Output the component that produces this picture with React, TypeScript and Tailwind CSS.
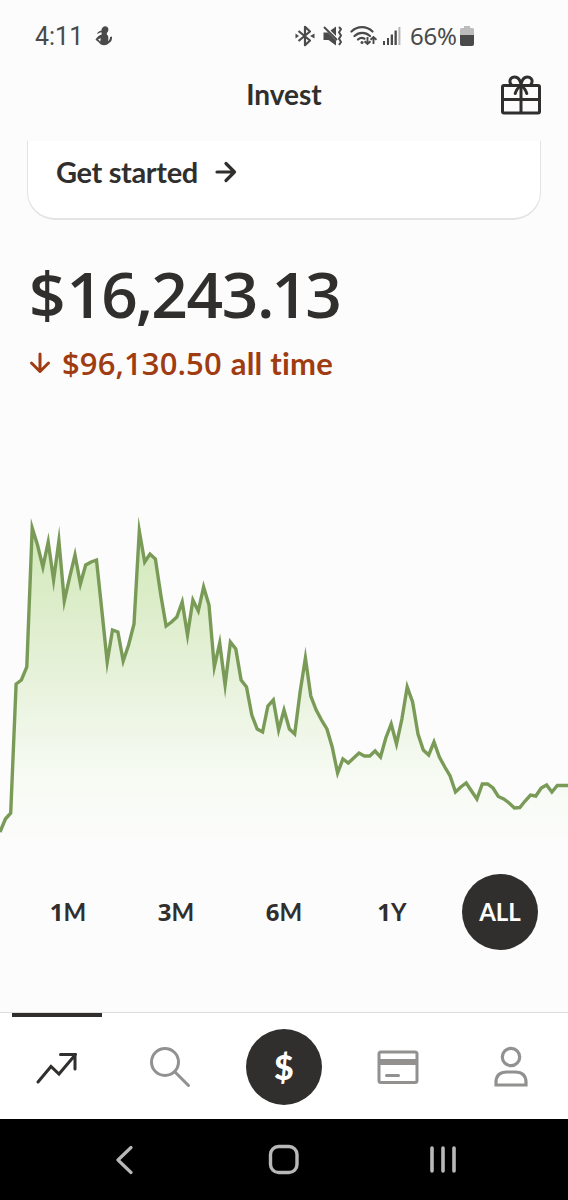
import React from 'react';

const INK = '#302f2e';
const MUTED = '#929190';

const CHART_WIDTH = 568;
const CHART_TOP = 500;
const CHART_HEIGHT = 350;

const PRICES = [
  832, 819, 813, 684, 680, 667, 528, 545, 567, 542, 580, 541, 601, 577, 555, 584, 565, 562, 560, 610,
  662, 630, 632, 661, 645, 624, 531, 562, 554, 559, 595, 626, 622, 617, 602, 635, 600, 611, 587, 605,
  667, 643, 685, 642, 649, 680, 687, 715, 729, 732, 706, 700, 730, 710, 729, 734, 692, 658, 696, 710,
  720, 729, 747, 773, 759, 763, 758, 753, 756, 756, 751, 757, 738, 724, 744, 719, 687, 702, 734, 750,
  755, 742, 757, 767, 776, 792, 787, 783, 791, 799, 784, 784, 788, 796.5, 799, 803, 808, 807.5, 801, 795,
  796, 788, 785, 792, 785.5, 785.5, 785.5,
];

const RANGES = ['1M', '3M', '6M', '1Y', 'ALL'];

const StatusBar = () => (
  <div className="flex h-[72px] shrink-0 items-center pl-[35px] text-[#4a4a4a]">
    <span className="w-[49px] font-[Roboto,sans-serif] text-[25px] leading-none">4:11</span>
    <svg className="ml-[11px]" width="18" height="20" viewBox="0 0 18 20" fill="currentColor">
      <path d="M6.500 3.500C7 1.500 8.500.2 10.200.2c2 0 3.200 1.500 3.200 3.300 0 1.500-.6 2.700-1.600 3.500v1.500c1.400 1 1.800 2.500 1.500 4.500l-.2 2c1.300-.6 1.700-2 2-4l1.900-.5c.3 3-.6 5.300-3 6.500-1.300 1.500-3 2.200-5 2.200-2.300 0-4-1-5.200-3L.5 13.700c1.200-2.400 3.500-4.400 6.200-5.200L6.500 6.300C4.800 6.500 3.700 7.700 2 7.900c.4-1.700 2.300-2.700 4.500-3.400z" />
      <path d="M3 13.300l2.200 2.200.6-3.300z" fill="#fcfcfc" />
    </svg>
    <svg className="ml-[182px]" width="20" height="22" viewBox="0 0 20 22" fill="none" stroke="currentColor" strokeWidth="2.200">
      <path d="M3.500 6l11.500 9.500-5 4.700V1.800l5 4.700L3.500 16" strokeLinejoin="round" />
      <path d="M.5 8.500L4 11 .5 13.500zM19.500 8.500L15 11l4.500 2.500z" fill="currentColor" stroke="none" />
    </svg>
    <svg className="ml-[7px]" width="22" height="22" viewBox="0 0 22 22" fill="none" stroke="currentColor" strokeWidth="2">
      <path d="M1.500 7.500h4.500l8 8v5L6.500 15h-5z" fill="currentColor" stroke="none" />
      <path d="M8.500 5.500L14 1.500v9.500z" fill="currentColor" stroke="none" />
      <path d="M2 2l13 13" />
      <path d="M17 2l2 2.200-2 3 2 3.300-2 3.200 2 3.300-2 3" strokeLinejoin="round" />
    </svg>
    <svg className="ml-[6px]" width="27" height="22" viewBox="0 0 27 22" fill="none" stroke="currentColor" strokeWidth="2.200">
      <path d="M1.500 6.500c6-5.800 15-5.800 21 0M4.500 11c4.500-4.200 11-4.200 15.500 0M8 14.500c2-1.800 4.500-2 6.500-.8" strokeLinecap="round" />
      <circle cx="12" cy="17.500" r="1.500" fill="currentColor" stroke="none" />
      <path d="M17.500 12v7m-3-2.800L17.500 19l3-2.800M23.500 19v-7m-3 2.800l3-2.800 3 2.800" strokeWidth="1.900" />
    </svg>
    <svg className="ml-[6px]" width="18" height="22" viewBox="0 0 18 22" fill="currentColor">
      <path d="M0 16h2v4H0zM4 13h2v7H4zM7.700 9.500h2.300v10.500H7.700zM11.500 5.500h2.300V20h-2.300z" />
      <path d="M15.400 2h2v18h-2z" opacity=".4" />
    </svg>
    <span className="ml-[9px] w-[48px] font-['Noto_Sans',sans-serif] text-[24px] leading-none tracking-[-0.2px]">66%</span>
    <svg className="ml-[2px]" width="14" height="22" viewBox="0 0 14 22" fill="currentColor">
      <path d="M4 1h6v2h2.500q1.500 0 1.500 1.500V10H0V4.500Q0 3 1.500 3H4z" fill="#bcbcbc" />
      <path d="M0 10h14v9q0 2-2 2H2q-2 0-2-2z" />
    </svg>
  </div>
);

const Header = () => (
  <header className="grid h-[69px] shrink-0 grid-cols-[1fr_auto_1fr] items-start px-[26px]">
    <h1 className="col-start-2 pt-[4px] text-[28px] leading-[36px] font-bold">Invest</h1>
    <button className="mt-[3px] justify-self-end" aria-label="Gifts">
      <svg width="42" height="40" viewBox="0 0 42 40" fill="none" stroke={INK} strokeWidth="3">
        <rect x="2.500" y="10.500" width="37" height="27.500" rx="1.500" />
        <path d="M2.500 24.500h37M21 11v27" />
        <path d="M21 11c0-5-2.500-9-6.500-9-3 0-5 2.500-4.500 5 .3 2 1.500 3.500 3 3.500M21 11c0-5 2.500-9 6.500-9 3 0 5 2.500 4.500 5-.3 2-1.500 3.500-3 3.500" />
        <path d="M21 11c-3 1.500-4.800 4-5.800 7.500M21 11c3 1.500 4.800 4 5.800 7.500" strokeLinecap="round" />
      </svg>
    </button>
  </header>
);

const PromoCard = () => (
  <div className="mx-[27px] flex h-[79px] shrink-0 items-start gap-[17px] rounded-b-[28px] border-x-[1.500px] border-b-2 border-[#e3e3e3] bg-white pt-[13px] pl-[28px]">
    <span className="text-[29px] leading-[36px] font-bold tracking-[-0.35px]">Get started</span>
    <svg className="mt-[7px]" width="22" height="22" viewBox="0 0 22 22" fill="none" stroke={INK} strokeWidth="3.200" strokeLinecap="round" strokeLinejoin="round">
      <path d="M2 11h17.500M11 2.500l8.500 8.500-8.500 8.500" />
    </svg>
  </div>
);

const Balance = () => (
  <section className="h-[280px] shrink-0 pt-[40px] pl-[29px] font-['Open_Sans',sans-serif] font-semibold">
    <p className="text-[64px] leading-[68px] whitespace-nowrap">
      <span className="tracking-[1px]">$</span>
      <span className="tracking-[-2px]">16,</span>
      <span className="tracking-[-1.300px]">243</span>
      <span className="tracking-[-3px]">.13</span>
    </p>
    <div className="mt-[15px] flex items-center text-[#9f3c11]">
      <svg width="22" height="22" viewBox="0 0 22 22" fill="none" stroke="currentColor" strokeWidth="3" strokeLinecap="round" strokeLinejoin="round">
        <path d="M11 2v17M2.500 11l8.500 8.500 8.500-8.500" />
      </svg>
      <p className="ml-[11px] text-[31px] leading-[40px] whitespace-nowrap">
        <span className="tracking-[0.1px]">$96,130.50</span>
        <span className="ml-[9px] font-[Lato,sans-serif] font-bold tracking-[0.2px] [font-variant-ligatures:none]">all time</span>
      </p>
    </div>
  </section>
);

const PriceChart = () => {
  const step = CHART_WIDTH / (PRICES.length - 1);
  const line = PRICES.map((y, i) => `${(i * step).toFixed(1)},${y - CHART_TOP}`).join(' ');

  return (
    <svg className="block shrink-0" width={CHART_WIDTH} height={CHART_HEIGHT} viewBox={`0 0 ${CHART_WIDTH} ${CHART_HEIGHT}`}>
      <defs>
        <linearGradient id="area" gradientUnits="userSpaceOnUse" x1="0" y1="20" x2="0" y2="348">
          <stop offset="0" stopColor="#d0e9b7" />
          <stop offset="0.250" stopColor="#dcedc9" />
          <stop offset="0.500" stopColor="#e8f2dc" />
          <stop offset="0.750" stopColor="#f5faf1" />
          <stop offset="1" stopColor="#fcfcfc" />
        </linearGradient>
      </defs>
      <polygon points={`0,${CHART_HEIGHT} ${line} ${CHART_WIDTH},${CHART_HEIGHT}`} fill="url(#area)" />
      <polyline points={line} fill="none" stroke="#799b57" strokeWidth="3.400" strokeMiterlimit="20" />
    </svg>
  );
};

const RangePicker = () => (
  <div className="flex h-[162px] shrink-0 items-start justify-between px-[30px] pt-[24px]">
    {RANGES.map((range) => (
      <button
        key={range}
        className={`flex h-[76px] w-[76px] items-center justify-center rounded-full text-[24px] font-bold ${
          range === 'ALL' ? 'bg-[#302f2e] text-white' : ''
        }`}
      >
        {/^\d/.test(range) ? (
          <>
            <span className="font-['Open_Sans',sans-serif]">{range[0]}</span>
            <span>{range.slice(1)}</span>
          </>
        ) : (
          range
        )}
      </button>
    ))}
  </div>
);

const TabBar = () => (
  <nav className="grid h-[107px] shrink-0 grid-cols-5 border-t border-[#dedede] bg-white">
    <button className="flex flex-col items-center" aria-label="Invest">
      <span className="h-[4px] w-[90px] bg-[#302f2e]" />
      <svg className="mt-[34px]" width="42" height="34" viewBox="0 0 42 34" fill="none" stroke={INK} strokeWidth="3" strokeLinecap="round">
        <path d="M2 31L15 15.500l8 7.500L39.500 3.500M24.500 3.500h14.500V18" />
      </svg>
    </button>
    <button className="flex justify-center pt-[33px]" aria-label="Search">
      <svg width="42" height="42" viewBox="0 0 42 42" fill="none" stroke={MUTED} strokeWidth="3" strokeLinecap="round">
        <circle cx="16" cy="16" r="13.500" />
        <path d="M26 26l13.500 13.500" />
      </svg>
    </button>
    <button className="flex justify-center pt-[16px]" aria-label="Transfer">
      <span className="flex h-[76px] w-[76px] items-center justify-center rounded-full bg-[#302f2e] font-[Lato,sans-serif] text-[34px] leading-none font-black text-white">
        $
      </span>
    </button>
    <button className="flex justify-center pt-[37px]" aria-label="Card">
      <svg width="42" height="34" viewBox="0 0 42 34" fill="none" stroke={MUTED} strokeWidth="3">
        <rect x="2" y="2" width="38" height="30.500" rx="2" />
        <path d="M2 12h38" strokeWidth="6" />
        <path d="M9.500 25.500h12" strokeLinecap="round" />
      </svg>
    </button>
    <button className="flex justify-center pt-[33px]" aria-label="Profile">
      <svg width="36" height="42" viewBox="0 0 36 42" fill="none" stroke={MUTED} strokeWidth="3.200">
        <circle cx="18" cy="11" r="8.700" />
        <path d="M3 39V36.500q0-10.500 11-10.500h8q11 0 11 10.500v2.500z" />
      </svg>
    </button>
  </nav>
);

const SystemNav = () => (
  <div className="flex h-[82px] shrink-0 items-center bg-black pl-[115px]">
    <svg width="18" height="30" viewBox="0 0 18 30" fill="none" stroke="#b8b8b8" strokeWidth="3.200" strokeLinecap="round" strokeLinejoin="round">
      <path d="M16 2.500L3 15l13 12.500" />
    </svg>
    <svg className="ml-[135px]" width="32" height="32" viewBox="0 0 32 32" fill="none" stroke="#b8b8b8" strokeWidth="3.400">
      <rect x="2.500" y="2.500" width="26.500" height="26" rx="8" />
    </svg>
    <svg className="ml-[129px]" width="28" height="30" viewBox="0 0 28 30" fill="none" stroke="#b8b8b8" strokeWidth="3.600" strokeLinecap="round">
      <path d="M3 3v23M14 3v23M25 3v23" />
    </svg>
  </div>
);

export default function App() {
  return (
    <main className="flex h-[1200px] w-[568px] flex-col overflow-hidden bg-[#fcfcfc] font-[Lato,sans-serif] text-[#302f2e]">
      <StatusBar />
      <Header />
      <PromoCard />
      <Balance />
      <PriceChart />
      <RangePicker />
      <TabBar />
      <SystemNav />
    </main>
  );
}
